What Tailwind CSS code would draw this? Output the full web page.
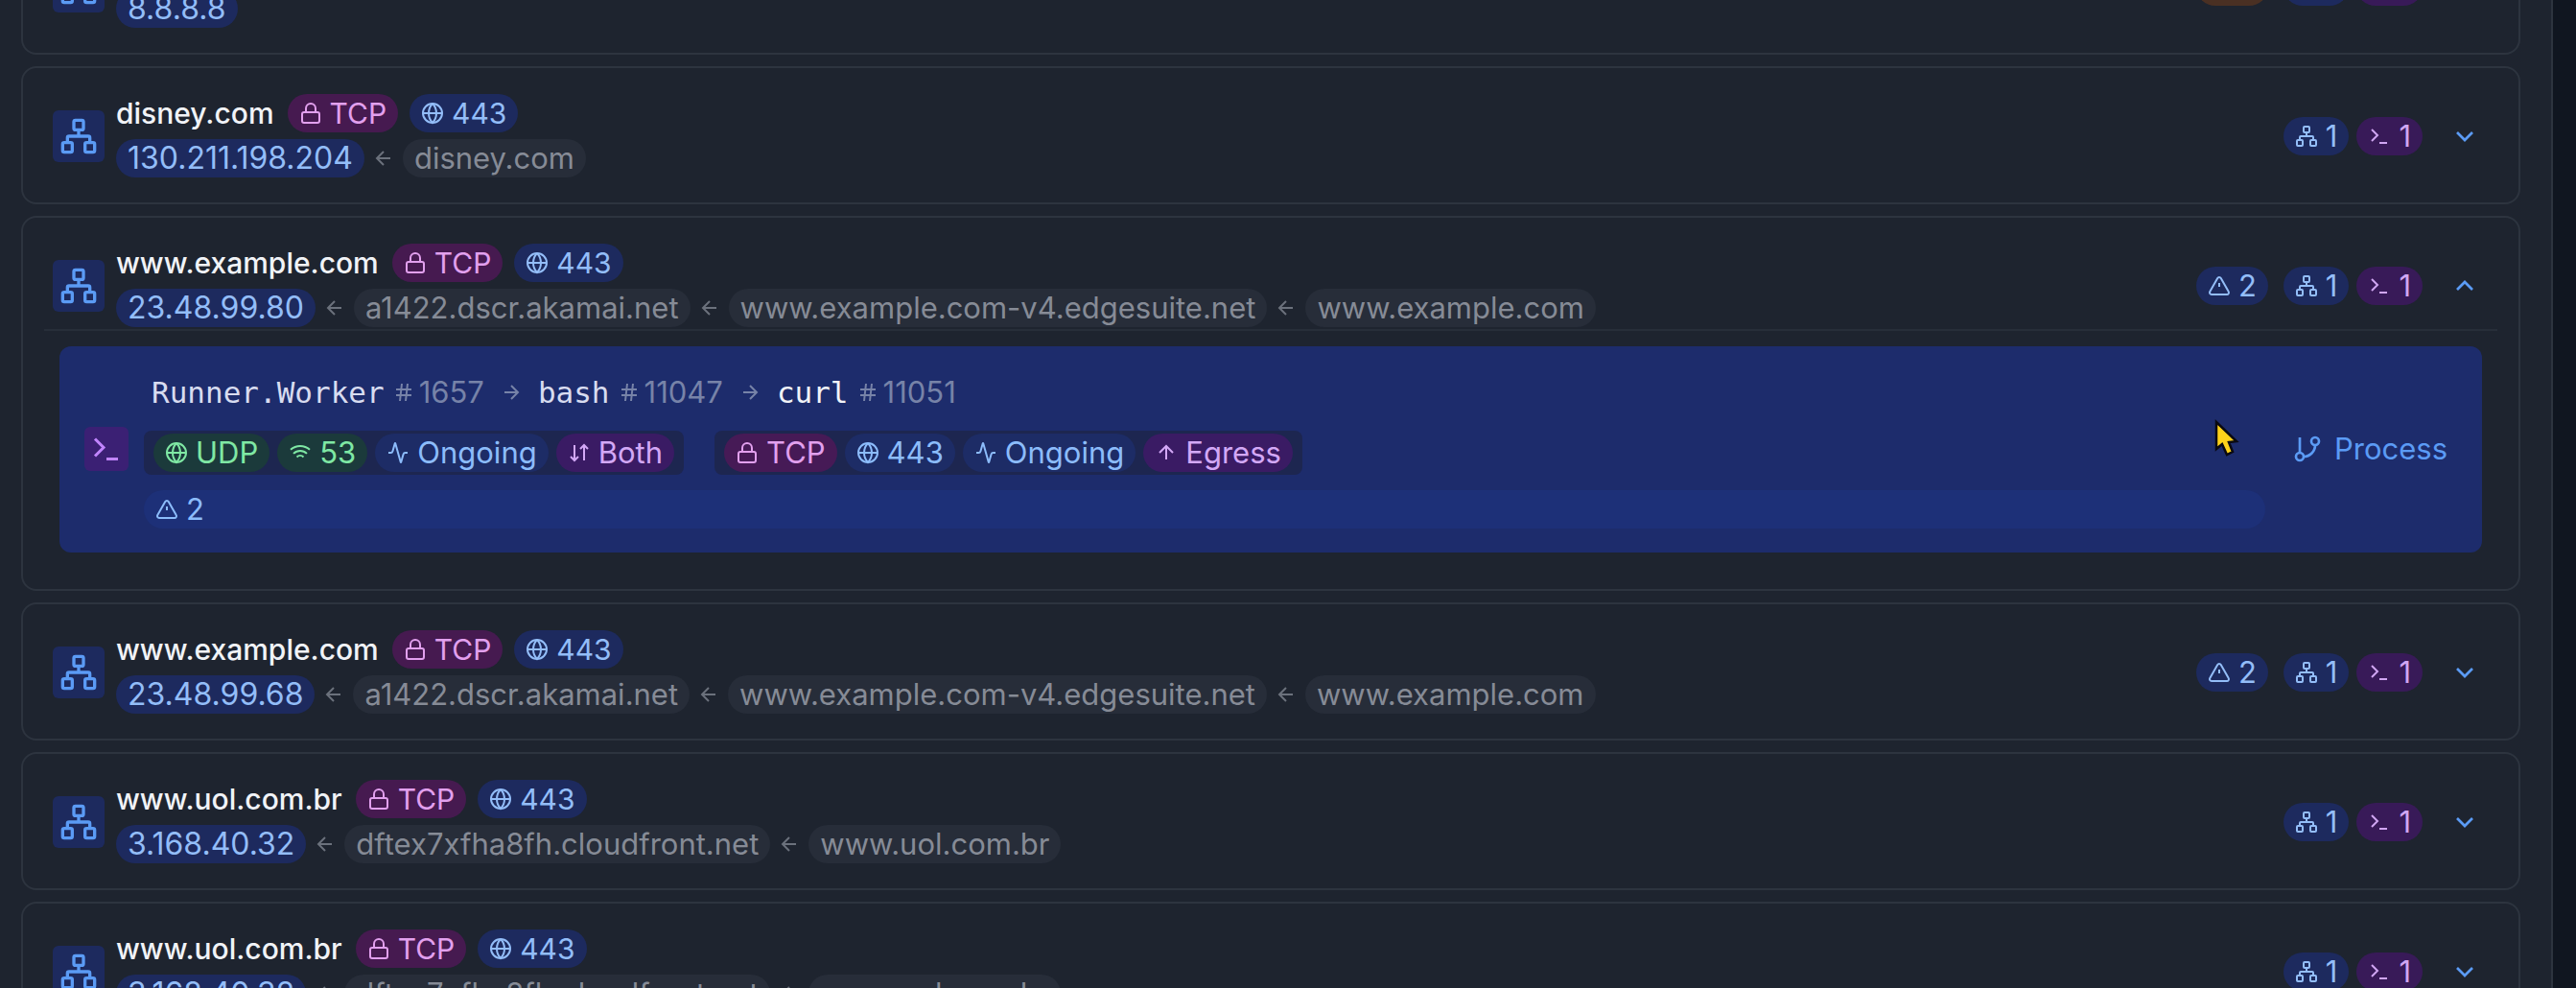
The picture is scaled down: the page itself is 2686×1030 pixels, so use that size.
<!DOCTYPE html>
<html lang="en">
<head>
<meta charset="utf-8">
<title>Network peers</title>
<script src="https://cdn.jsdelivr.net/npm/@tailwindcss/browser@4"></script>
</head>
<body class="bg-[#101620] font-[Inter,sans-serif] text-[31px] leading-10 text-[#f1f3f7]">

<svg class="hidden" aria-hidden="true">
  <defs>
    <g id="network"><rect x="16" y="16" width="6" height="6" rx="1"/><rect x="2" y="16" width="6" height="6" rx="1"/><rect x="9" y="2" width="6" height="6" rx="1"/><path d="M5 16v-3a1 1 0 0 1 1-1h12a1 1 0 0 1 1 1v3M12 12V8"/></g>
    <g id="lock"><rect x="3" y="11" width="18" height="11" rx="2"/><path d="M7 11V7a5 5 0 0 1 10 0v4"/></g>
    <g id="globe"><circle cx="12" cy="12" r="10"/><path d="M12 2a14.5 14.5 0 0 0 0 20 14.5 14.5 0 0 0 0-20M2 12h20"/></g>
    <g id="left"><path d="m12 19-7-7 7-7M19 12H5"/></g>
    <g id="right"><path d="M5 12h14M12 5l7 7-7 7"/></g>
    <g id="up"><path d="m5 12 7-7 7 7M12 19V5"/></g>
    <g id="updown"><path d="m3 16 4 4 4-4M7 20V4M21 8l-4-4-4 4M17 4v16"/></g>
    <g id="terminal"><path d="m4 17 6-6-6-6M12 19h8"/></g>
    <g id="alert"><path d="m21.73 18-8-14a2 2 0 0 0-3.48 0l-8 14A2 2 0 0 0 4 21h16a2 2 0 0 0 1.73-3M12 9v4M12 17h.01"/></g>
    <g id="down"><path d="m6 9 6 6 6-6"/></g>
    <g id="chevup"><path d="m18 15-6-6-6 6"/></g>
    <g id="hash"><path d="M4 9h16M4 15h16M10 3 8 21M16 3l-2 18"/></g>
    <g id="wifi"><path d="M12 20h.01M2 8.82a15 15 0 0 1 20 0M5 12.86a10 10 0 0 1 14 0M8.5 16.43a5 5 0 0 1 7 0"/></g>
    <g id="activity"><path d="M22 12h-2.48a2 2 0 0 0-1.93 1.46l-2.35 8.36a.25.25 0 0 1-.48 0L9.24 2.18a.25.25 0 0 0-.48 0l-2.35 8.36A2 2 0 0 1 4.49 12H2"/></g>
    <g id="branch"><path d="M6 3v12"/><circle cx="18" cy="6" r="3"/><circle cx="6" cy="18" r="3"/><path d="M18 9a9 9 0 0 1-9 9"/></g>
  </defs>
</svg>

<main class="mr-6 h-screen overflow-hidden border-r-2 border-[#2d343f] bg-[#1e242f] pl-[22px] pr-8">
  <ul class="-mt-[87px] flex flex-col gap-3">

    <li class="rounded-2xl border-2 border-[#2d343f] pb-[26px] pl-[31px] pr-10 pt-[27px]">
      <div class="flex items-center gap-3">
        <span class="flex size-[54px] items-center justify-center rounded-md bg-[#1d2a5e] text-[#5b9bf5]"><svg class="size-10 fill-none stroke-current stroke-2" viewBox="0 0 24 24"><use href="#network"/></svg></span>
        <div class="flex flex-1 flex-col gap-[7px]">
          <div class="h-10"></div>
          <div class="flex items-center gap-2"><span class="rounded-full bg-[#1d2a5e] px-3 text-[32px] text-[#93bdf8]">8.8.8.8</span></div>
        </div>
        <div class="flex items-center">
          <span class="mr-4 flex items-center gap-2 rounded-full bg-[#4a3023] px-3 text-[#f0b482]"><svg class="size-6 fill-none stroke-current stroke-2" viewBox="0 0 24 24"><use href="#alert"/></svg>2</span>
          <span class="mr-2 flex items-center gap-2 rounded-full bg-[#1d2a5e] px-3 text-[#93bdf8]"><svg class="size-6 fill-none stroke-current stroke-2" viewBox="0 0 24 24"><use href="#network"/></svg>1</span>
          <span class="flex items-center gap-2 rounded-full bg-[#381a58] px-3 text-[#d0a6f2]"><svg class="size-6 fill-none stroke-current stroke-2" viewBox="0 0 24 24"><use href="#terminal"/></svg>1</span>
          <button class="ml-7 flex" aria-label="Expand"><svg class="size-8 fill-none stroke-[#5b9bf5] stroke-2" viewBox="0 0 24 24"><use href="#down"/></svg></button>
        </div>
      </div>
    </li>

    <li class="rounded-2xl border-2 border-[#2d343f] pb-[26px] pl-[31px] pr-10 pt-[27px]">
      <div class="flex items-center gap-3">
        <span class="flex size-[54px] items-center justify-center rounded-md bg-[#1d2a5e] text-[#5b9bf5]"><svg class="size-10 fill-none stroke-current stroke-2" viewBox="0 0 24 24"><use href="#network"/></svg></span>
        <div class="flex flex-1 flex-col gap-[7px]">
          <div class="flex items-center gap-3 text-[30px]">
            <h2 class="pr-0.5 font-medium">disney.com</h2>
            <span class="flex items-center gap-2 rounded-full bg-[#461a50] px-3 text-[#e2a0ee]"><svg class="size-6 fill-none stroke-current stroke-2" viewBox="0 0 24 24"><use href="#lock"/></svg>TCP</span>
            <span class="flex items-center gap-2 rounded-full bg-[#1d2a5e] px-3 text-[#93bdf8]"><svg class="size-6 fill-none stroke-current stroke-2" viewBox="0 0 24 24"><use href="#globe"/></svg>443</span>
          </div>
          <div class="flex items-center gap-2 text-[#868b96]">
            <span class="rounded-full bg-[#1d2a5e] px-3 text-[32px] text-[#93bdf8]">130.211.198.204</span>
            <svg class="size-6 fill-none stroke-[#6b717c] stroke-2" viewBox="0 0 24 24"><use href="#left"/></svg>
            <span class="rounded-full bg-[#272d39] px-3">disney.com</span>
          </div>
        </div>
        <div class="flex items-center">
          <span class="mr-2 flex items-center gap-2 rounded-full bg-[#1d2a5e] px-3 text-[#93bdf8]"><svg class="size-6 fill-none stroke-current stroke-2" viewBox="0 0 24 24"><use href="#network"/></svg>1</span>
          <span class="flex items-center gap-2 rounded-full bg-[#381a58] px-3 text-[#d0a6f2]"><svg class="size-6 fill-none stroke-current stroke-2" viewBox="0 0 24 24"><use href="#terminal"/></svg>1</span>
          <button class="ml-7 flex" aria-label="Expand"><svg class="size-8 fill-none stroke-[#5b9bf5] stroke-2" viewBox="0 0 24 24"><use href="#down"/></svg></button>
        </div>
      </div>
    </li>

    <li class="rounded-2xl border-2 border-[#2d343f] pb-[38px] pt-[27px]">
      <div class="flex items-center gap-3 pl-[31px] pr-10">
        <span class="flex size-[54px] items-center justify-center rounded-md bg-[#1d2a5e] text-[#5b9bf5]"><svg class="size-10 fill-none stroke-current stroke-2" viewBox="0 0 24 24"><use href="#network"/></svg></span>
        <div class="flex flex-1 flex-col gap-[7px]">
          <div class="flex items-center gap-3 text-[30px]">
            <h2 class="pr-0.5 font-medium">www.example.com</h2>
            <span class="flex items-center gap-2 rounded-full bg-[#461a50] px-3 text-[#e2a0ee]"><svg class="size-6 fill-none stroke-current stroke-2" viewBox="0 0 24 24"><use href="#lock"/></svg>TCP</span>
            <span class="flex items-center gap-2 rounded-full bg-[#1d2a5e] px-3 text-[#93bdf8]"><svg class="size-6 fill-none stroke-current stroke-2" viewBox="0 0 24 24"><use href="#globe"/></svg>443</span>
          </div>
          <div class="flex items-center gap-2 text-[#868b96]">
            <span class="rounded-full bg-[#1d2a5e] px-3 text-[32px] text-[#93bdf8]">23.48.99.80</span>
            <svg class="size-6 fill-none stroke-[#6b717c] stroke-2" viewBox="0 0 24 24"><use href="#left"/></svg>
            <span class="rounded-full bg-[#272d39] px-3">a1422.dscr.akamai.net</span>
            <svg class="size-6 fill-none stroke-[#6b717c] stroke-2" viewBox="0 0 24 24"><use href="#left"/></svg>
            <span class="rounded-full bg-[#272d39] px-3">www.example.com-v4.edgesuite.net</span>
            <svg class="size-6 fill-none stroke-[#6b717c] stroke-2" viewBox="0 0 24 24"><use href="#left"/></svg>
            <span class="rounded-full bg-[#272d39] px-3">www.example.com</span>
          </div>
        </div>
        <div class="flex items-center">
          <span class="mr-4 flex items-center gap-2 rounded-full bg-[#1d2a5e] px-3 text-[#93bdf8]"><svg class="size-6 fill-none stroke-current stroke-2" viewBox="0 0 24 24"><use href="#alert"/></svg>2</span>
          <span class="mr-2 flex items-center gap-2 rounded-full bg-[#1d2a5e] px-3 text-[#93bdf8]"><svg class="size-6 fill-none stroke-current stroke-2" viewBox="0 0 24 24"><use href="#network"/></svg>1</span>
          <span class="flex items-center gap-2 rounded-full bg-[#381a58] px-3 text-[#d0a6f2]"><svg class="size-6 fill-none stroke-current stroke-2" viewBox="0 0 24 24"><use href="#terminal"/></svg>1</span>
          <button class="ml-7 flex" aria-label="Collapse"><svg class="size-8 fill-none stroke-[#5b9bf5] stroke-2" viewBox="0 0 24 24"><use href="#chevup"/></svg></button>
        </div>
      </div>
      <div class="mx-[22px] mt-[2px] border-t-2 border-[#272e39] px-4 pt-4">
        <div class="flex items-center gap-4 rounded-xl bg-[#1d2c6c] pb-[25px] pl-[26px] pr-6 pt-6">
          <span class="flex size-[46px] items-center justify-center rounded-md bg-[#3b2074] text-[#c084fc]"><svg class="size-9 fill-none stroke-current stroke-2" viewBox="0 0 24 24"><use href="#terminal"/></svg></span>
          <div class="flex flex-1 flex-col gap-4">
            <div class="flex items-center gap-2 py-1 pl-2 text-[#7783a8]">
              <span class="font-['DejaVu_Sans_Mono',monospace] text-[#d8dcf0]">Runner.Worker</span>
              <span class="flex items-center gap-1"><svg class="size-6 fill-none stroke-current stroke-2" viewBox="0 0 24 24"><use href="#hash"/></svg>1657</span>
              <svg class="mx-2 size-6 fill-none stroke-current stroke-2" viewBox="0 0 24 24"><use href="#right"/></svg>
              <span class="font-['DejaVu_Sans_Mono',monospace] text-[#d8dcf0]">bash</span>
              <span class="flex items-center gap-1"><svg class="size-6 fill-none stroke-current stroke-2" viewBox="0 0 24 24"><use href="#hash"/></svg>11047</span>
              <svg class="mx-2 size-6 fill-none stroke-current stroke-2" viewBox="0 0 24 24"><use href="#right"/></svg>
              <span class="font-['DejaVu_Sans_Mono',monospace] text-[#f1f3f7]">curl</span>
              <span class="flex items-center gap-1"><svg class="size-6 fill-none stroke-current stroke-2" viewBox="0 0 24 24"><use href="#hash"/></svg>11051</span>
            </div>
            <div class="flex gap-8">
              <div class="flex gap-2 rounded-lg bg-[#1d2650] px-[10px] py-[3px]">
                <span class="flex items-center gap-2 rounded-full bg-[#1b3a3b] px-3 text-[#7fe8a4]"><svg class="size-6 fill-none stroke-current stroke-2" viewBox="0 0 24 24"><use href="#globe"/></svg>UDP</span>
                <span class="flex items-center gap-2 rounded-full bg-[#1b3a3b] px-3 text-[#7fe8a4]"><svg class="size-6 fill-none stroke-current stroke-2" viewBox="0 0 24 24"><use href="#wifi"/></svg>53</span>
                <span class="flex items-center gap-2 rounded-full bg-[#1d2c66] px-3 text-[#8cbcfb]"><svg class="size-6 fill-none stroke-current stroke-2" viewBox="0 0 24 24"><use href="#activity"/></svg>Ongoing</span>
                <span class="flex items-center gap-2 rounded-full bg-[#3a1b64] px-3 text-[#d3a8f6]"><svg class="size-6 fill-none stroke-current stroke-2" viewBox="0 0 24 24"><use href="#updown"/></svg>Both</span>
              </div>
              <div class="flex gap-2 rounded-lg bg-[#1d2650] px-[10px] py-[3px]">
                <span class="flex items-center gap-2 rounded-full bg-[#461a56] px-3 text-[#e2a0ee]"><svg class="size-6 fill-none stroke-current stroke-2" viewBox="0 0 24 24"><use href="#lock"/></svg>TCP</span>
                <span class="flex items-center gap-2 rounded-full bg-[#1d2c66] px-3 text-[#8cbcfb]"><svg class="size-6 fill-none stroke-current stroke-2" viewBox="0 0 24 24"><use href="#globe"/></svg>443</span>
                <span class="flex items-center gap-2 rounded-full bg-[#1d2c66] px-3 text-[#8cbcfb]"><svg class="size-6 fill-none stroke-current stroke-2" viewBox="0 0 24 24"><use href="#activity"/></svg>Ongoing</span>
                <span class="flex items-center gap-2 rounded-full bg-[#3a1b64] px-3 text-[#d3a8f6]"><svg class="size-6 fill-none stroke-current stroke-2" viewBox="0 0 24 24"><use href="#up"/></svg>Egress</span>
              </div>
            </div>
            <div class="flex items-center gap-2 rounded-full bg-[#1d3078] px-3 text-[#8cbcfb]"><svg class="size-6 fill-none stroke-current stroke-2" viewBox="0 0 24 24"><use href="#alert"/></svg>2</div>
          </div>
          <button class="flex items-center gap-3 px-3 text-[#5b9bf5]"><svg class="size-8 fill-none stroke-current stroke-2" viewBox="0 0 24 24"><use href="#branch"/></svg>Process</button>
        </div>
      </div>
    </li>

    <li class="rounded-2xl border-2 border-[#2d343f] pb-[26px] pl-[31px] pr-10 pt-[27px]">
      <div class="flex items-center gap-3">
        <span class="flex size-[54px] items-center justify-center rounded-md bg-[#1d2a5e] text-[#5b9bf5]"><svg class="size-10 fill-none stroke-current stroke-2" viewBox="0 0 24 24"><use href="#network"/></svg></span>
        <div class="flex flex-1 flex-col gap-[7px]">
          <div class="flex items-center gap-3 text-[30px]">
            <h2 class="pr-0.5 font-medium">www.example.com</h2>
            <span class="flex items-center gap-2 rounded-full bg-[#461a50] px-3 text-[#e2a0ee]"><svg class="size-6 fill-none stroke-current stroke-2" viewBox="0 0 24 24"><use href="#lock"/></svg>TCP</span>
            <span class="flex items-center gap-2 rounded-full bg-[#1d2a5e] px-3 text-[#93bdf8]"><svg class="size-6 fill-none stroke-current stroke-2" viewBox="0 0 24 24"><use href="#globe"/></svg>443</span>
          </div>
          <div class="flex items-center gap-2 text-[#868b96]">
            <span class="rounded-full bg-[#1d2a5e] px-3 text-[32px] text-[#93bdf8]">23.48.99.68</span>
            <svg class="size-6 fill-none stroke-[#6b717c] stroke-2" viewBox="0 0 24 24"><use href="#left"/></svg>
            <span class="rounded-full bg-[#272d39] px-3">a1422.dscr.akamai.net</span>
            <svg class="size-6 fill-none stroke-[#6b717c] stroke-2" viewBox="0 0 24 24"><use href="#left"/></svg>
            <span class="rounded-full bg-[#272d39] px-3">www.example.com-v4.edgesuite.net</span>
            <svg class="size-6 fill-none stroke-[#6b717c] stroke-2" viewBox="0 0 24 24"><use href="#left"/></svg>
            <span class="rounded-full bg-[#272d39] px-3">www.example.com</span>
          </div>
        </div>
        <div class="flex items-center">
          <span class="mr-4 flex items-center gap-2 rounded-full bg-[#1d2a5e] px-3 text-[#93bdf8]"><svg class="size-6 fill-none stroke-current stroke-2" viewBox="0 0 24 24"><use href="#alert"/></svg>2</span>
          <span class="mr-2 flex items-center gap-2 rounded-full bg-[#1d2a5e] px-3 text-[#93bdf8]"><svg class="size-6 fill-none stroke-current stroke-2" viewBox="0 0 24 24"><use href="#network"/></svg>1</span>
          <span class="flex items-center gap-2 rounded-full bg-[#381a58] px-3 text-[#d0a6f2]"><svg class="size-6 fill-none stroke-current stroke-2" viewBox="0 0 24 24"><use href="#terminal"/></svg>1</span>
          <button class="ml-7 flex" aria-label="Expand"><svg class="size-8 fill-none stroke-[#5b9bf5] stroke-2" viewBox="0 0 24 24"><use href="#down"/></svg></button>
        </div>
      </div>
    </li>

    <li class="rounded-2xl border-2 border-[#2d343f] pb-[26px] pl-[31px] pr-10 pt-[27px]">
      <div class="flex items-center gap-3">
        <span class="flex size-[54px] items-center justify-center rounded-md bg-[#1d2a5e] text-[#5b9bf5]"><svg class="size-10 fill-none stroke-current stroke-2" viewBox="0 0 24 24"><use href="#network"/></svg></span>
        <div class="flex flex-1 flex-col gap-[7px]">
          <div class="flex items-center gap-3 text-[30px]">
            <h2 class="pr-0.5 font-medium">www.uol.com.br</h2>
            <span class="flex items-center gap-2 rounded-full bg-[#461a50] px-3 text-[#e2a0ee]"><svg class="size-6 fill-none stroke-current stroke-2" viewBox="0 0 24 24"><use href="#lock"/></svg>TCP</span>
            <span class="flex items-center gap-2 rounded-full bg-[#1d2a5e] px-3 text-[#93bdf8]"><svg class="size-6 fill-none stroke-current stroke-2" viewBox="0 0 24 24"><use href="#globe"/></svg>443</span>
          </div>
          <div class="flex items-center gap-2 text-[#868b96]">
            <span class="rounded-full bg-[#1d2a5e] px-3 text-[32px] text-[#93bdf8]">3.168.40.32</span>
            <svg class="size-6 fill-none stroke-[#6b717c] stroke-2" viewBox="0 0 24 24"><use href="#left"/></svg>
            <span class="rounded-full bg-[#272d39] px-3">dftex7xfha8fh.cloudfront.net</span>
            <svg class="size-6 fill-none stroke-[#6b717c] stroke-2" viewBox="0 0 24 24"><use href="#left"/></svg>
            <span class="rounded-full bg-[#272d39] px-3">www.uol.com.br</span>
          </div>
        </div>
        <div class="flex items-center">
          <span class="mr-2 flex items-center gap-2 rounded-full bg-[#1d2a5e] px-3 text-[#93bdf8]"><svg class="size-6 fill-none stroke-current stroke-2" viewBox="0 0 24 24"><use href="#network"/></svg>1</span>
          <span class="flex items-center gap-2 rounded-full bg-[#381a58] px-3 text-[#d0a6f2]"><svg class="size-6 fill-none stroke-current stroke-2" viewBox="0 0 24 24"><use href="#terminal"/></svg>1</span>
          <button class="ml-7 flex" aria-label="Expand"><svg class="size-8 fill-none stroke-[#5b9bf5] stroke-2" viewBox="0 0 24 24"><use href="#down"/></svg></button>
        </div>
      </div>
    </li>

    <li class="rounded-2xl border-2 border-[#2d343f] pb-[26px] pl-[31px] pr-10 pt-[27px]">
      <div class="flex items-center gap-3">
        <span class="flex size-[54px] items-center justify-center rounded-md bg-[#1d2a5e] text-[#5b9bf5]"><svg class="size-10 fill-none stroke-current stroke-2" viewBox="0 0 24 24"><use href="#network"/></svg></span>
        <div class="flex flex-1 flex-col gap-[7px]">
          <div class="flex items-center gap-3 text-[30px]">
            <h2 class="pr-0.5 font-medium">www.uol.com.br</h2>
            <span class="flex items-center gap-2 rounded-full bg-[#461a50] px-3 text-[#e2a0ee]"><svg class="size-6 fill-none stroke-current stroke-2" viewBox="0 0 24 24"><use href="#lock"/></svg>TCP</span>
            <span class="flex items-center gap-2 rounded-full bg-[#1d2a5e] px-3 text-[#93bdf8]"><svg class="size-6 fill-none stroke-current stroke-2" viewBox="0 0 24 24"><use href="#globe"/></svg>443</span>
          </div>
          <div class="flex items-center gap-2 text-[#868b96]">
            <span class="rounded-full bg-[#1d2a5e] px-3 text-[32px] text-[#93bdf8]">3.168.40.32</span>
            <svg class="size-6 fill-none stroke-[#6b717c] stroke-2" viewBox="0 0 24 24"><use href="#left"/></svg>
            <span class="rounded-full bg-[#272d39] px-3">dftex7xfha8fh.cloudfront.net</span>
            <svg class="size-6 fill-none stroke-[#6b717c] stroke-2" viewBox="0 0 24 24"><use href="#left"/></svg>
            <span class="rounded-full bg-[#272d39] px-3">www.uol.com.br</span>
          </div>
        </div>
        <div class="flex items-center">
          <span class="mr-2 flex items-center gap-2 rounded-full bg-[#1d2a5e] px-3 text-[#93bdf8]"><svg class="size-6 fill-none stroke-current stroke-2" viewBox="0 0 24 24"><use href="#network"/></svg>1</span>
          <span class="flex items-center gap-2 rounded-full bg-[#381a58] px-3 text-[#d0a6f2]"><svg class="size-6 fill-none stroke-current stroke-2" viewBox="0 0 24 24"><use href="#terminal"/></svg>1</span>
          <button class="ml-7 flex" aria-label="Expand"><svg class="size-8 fill-none stroke-[#5b9bf5] stroke-2" viewBox="0 0 24 24"><use href="#down"/></svg></button>
        </div>
      </div>
    </li>
  </ul>
</main>

<!-- Mouse pointer -->
<svg class="pointer-events-none absolute left-[2308px] top-[436px] h-10 w-7" viewBox="0 0 28 40"><path d="M3 4v28l6-5 5 11 6-3-4-10 8-1z" fill="#ffd21a" stroke="#0a0a12" stroke-width="2.5"/></svg>
</body>
</html>
